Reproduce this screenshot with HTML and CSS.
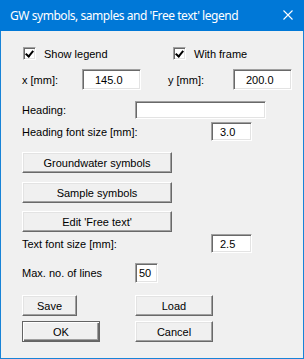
FILE: index.html
```html
<!DOCTYPE html>
<html lang="en">
<head>
    <meta charset="UTF-8">
    <title>GW symbols, samples and 'Free text' legend</title>
    <link rel="stylesheet" href="styles.css">
</head>
<body>

<div class="window">
    <div class="titlebar">
        <span class="title">GW symbols, samples and 'Free text' legend</span>
        <svg class="close" width="10" height="10" viewBox="0 0 10 10">
            <path d="M0.5 0.5 L9.5 9.5 M9.5 0.5 L0.5 9.5" stroke="#fff" stroke-width="1.1" fill="none"/>
        </svg>
    </div>

    <div class="content">
        <div class="row row-checks">
            <label class="check check-first"><span class="box checked"></span>Show legend</label>
            <label class="check"><span class="box checked"></span>With frame</label>
        </div>

        <div class="row row-xy">
            <span class="lbl w-x">x [mm]:</span>
            <span class="field f-xy">145.0</span>
            <span class="lbl w-y">y [mm]:</span>
            <span class="field f-xy">200.0</span>
        </div>

        <div class="row row-heading">
            <span class="lbl w-mid">Heading:</span>
            <span class="field f-heading"></span>
        </div>

        <div class="row row-hsize">
            <span class="lbl w-long">Heading font size [mm]:</span>
            <span class="field f-size">3.0</span>
        </div>

        <button class="btn wide b-gw">Groundwater symbols</button>
        <button class="btn wide b-sample">Sample symbols</button>
        <button class="btn wide b-edit">Edit 'Free text'</button>

        <div class="row row-tsize">
            <span class="lbl w-long">Text font size [mm]:</span>
            <span class="field f-size">2.5</span>
        </div>

        <div class="row row-lines">
            <span class="lbl w-mid">Max. no. of lines</span>
            <span class="field f-lines">50</span>
        </div>

        <div class="row row-save">
            <button class="btn small">Save</button>
            <button class="btn mid push">Load</button>
        </div>

        <div class="row row-ok">
            <button class="btn mid default">OK</button>
            <button class="btn mid push-ok">Cancel</button>
        </div>
    </div>
</div>

</body>
</html>
```

FILE: styles.css
```css
body {
    margin: 0;
    font-family: "Liberation Sans", Arial, sans-serif;
    font-size: 11px;
    color: #000;
}
.window {
    width: 304px;
    height: 359px;
    box-sizing: border-box;
    background-color: #f0f0f0;
    border: 1px solid #1883d7;
    border-top: none;
}
.titlebar {
    height: 31px;
    margin: 0 -1px;
    background-color: #0078d7;
    display: flex;
    align-items: center;
    justify-content: space-between;
    padding: 0 11px 0 10px;
}
.title {
    font-family: "Noto Sans", sans-serif;
    font-size: 12px;
    letter-spacing: -0.45px;
    color: #fff;
    margin-top: -1px;
}
.close {
    margin-top: -1px;
}
.content {
    padding-left: 21px;
}
.row {
    display: flex;
    align-items: center;
}
.row-checks { margin-top: 16px; height: 13px; }
.row-xy { margin-top: 9px; height: 21px; }
.row-heading { margin-top: 11px; height: 18px; }
.row-hsize { margin-top: 3px; height: 19px; }
.row-tsize { margin-top: 2px; height: 19px; }
.row-lines { margin-top: 10px; height: 20px; }
.row-save { margin-top: 12px; height: 21px; }
.row-ok { margin-top: 5px; height: 21px; }

.check {
    display: flex;
    align-items: center;
}
.check-first {
    width: 150px;
    margin-left: 1px;
}
.box {
    width: 13px;
    height: 13px;
    box-sizing: border-box;
    background-color: #fff;
    border-top: 1px solid #a0a0a0;
    border-left: 1px solid #a0a0a0;
    border-bottom: 1px solid #fff;
    border-right: 1px solid #fff;
    box-shadow: inset 1px 1px #696969, inset -1px -1px #e3e3e3;
    margin-right: 8px;
    position: relative;
}
.box.checked::after {
    content: "";
    position: absolute;
    left: 3px;
    top: 1px;
    width: 3px;
    height: 6px;
    border-right: 2px solid #000;
    border-bottom: 2px solid #000;
    transform: rotate(40deg);
}

.lbl {
    display: inline-block;
}
.w-x { width: 60px; }
.w-y { width: 65px; margin-left: 27px; }
.w-mid { width: 113px; }
.w-long { width: 189px; }

.field {
    box-sizing: border-box;
    height: 100%;
    background-color: #fff;
    border-top: 1px solid #a0a0a0;
    border-left: 1px solid #a0a0a0;
    border-bottom: 1px solid #fff;
    border-right: 1px solid #fff;
    box-shadow: inset 1px 1px #696969, inset -1px -1px #e3e3e3;
    display: flex;
    align-items: center;
}
.f-xy { width: 59px; padding-left: 12px; }
.f-heading { width: 131px; }
.f-size { width: 41px; padding-left: 8px; }
.f-lines { width: 23px; padding-left: 3px; }

.btn {
    display: block;
    box-sizing: border-box;
    height: 21px;
    padding: 0;
    font-family: "Liberation Sans", Arial, sans-serif;
    font-size: 11px;
    color: #000;
    background-color: #f0f0f0;
    border-top: 1px solid #fff;
    border-left: 1px solid #fff;
    border-bottom: 1px solid #696969;
    border-right: 1px solid #696969;
    box-shadow: inset -1px -1px #a0a0a0, inset 1px 1px #e3e3e3;
}
.wide { width: 150px; }
.b-gw { margin-top: 11px; }
.b-sample { margin-top: 9px; }
.b-edit { margin-top: 8px; }
.small { width: 55px; }
.mid { width: 78px; }
.push { margin-left: 58px; }
.push-ok { margin-left: 35px; }
.default {
    border: 1px solid #646464;
    box-shadow: inset 1px 1px #fff, inset -1px -1px #696969, inset -2px -2px #a0a0a0;
}
```
